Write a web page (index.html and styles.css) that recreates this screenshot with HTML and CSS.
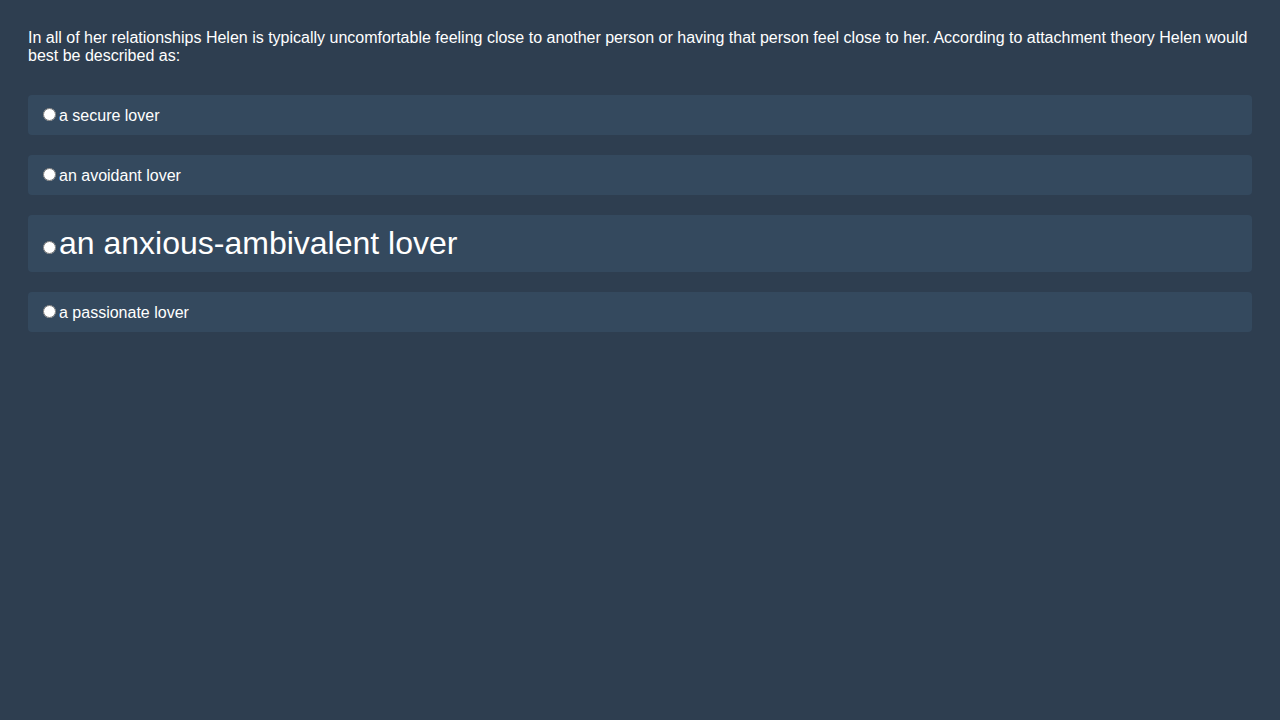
FILE: index.html
```html
<!DOCTYPE html>
<html>
<head>
<meta charset="utf-8">
<link rel="stylesheet" href="styles.css">
</head>
<body>
<div class="quiz">
  <p class="question">In all of her relationships Helen is typically uncomfortable feeling close to another person or having that person feel close to her. According to attachment theory Helen would best be described as:</p>
  <label class="option"><input type="radio" name="a">a secure lover</label>
  <label class="option"><input type="radio" name="a">an avoidant lover</label>
  <label class="option big"><input type="radio" name="a">an anxious-ambivalent lover</label>
  <label class="option"><input type="radio" name="a">a passionate lover</label>
</div>
</body>
</html>
```
FILE: styles.css
```css
html, body {
  margin: 0;
  background: #2e3e50;
}
body {
  font-family: "Liberation Sans", Arial, sans-serif;
  color: #ffffff;
  font-size: 16px;
}
.quiz {
  padding: 28px;
  display: flex;
  flex-direction: column;
  gap: 20px;
}
.question {
  margin: 1px 0 10px 0;
  line-height: 18px;
}
.option {
  display: block;
  background: #34495e;
  border-radius: 4px;
  padding: 10px;
}
.option.big {
  font-size: 32px;
}
```
